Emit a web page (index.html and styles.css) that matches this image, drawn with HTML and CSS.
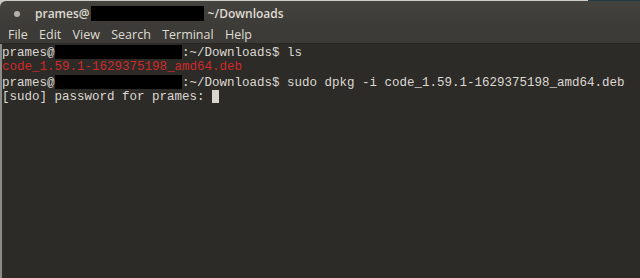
FILE: index.html
```html
<!DOCTYPE html>
<html>
<head>
<meta charset="utf-8">
<link rel="stylesheet" href="styles.css">
</head>
<body>
<div class="strip"><div class="strip-light"></div><div class="strip-blue"></div></div>
<div class="window">
  <div class="titlebar">
    <span class="dot"></span>
    <span class="title">prames@</span>
    <span class="redact-title"></span>
    <span class="title">~/Downloads</span>
  </div>
  <div class="menubar">
    <span>File</span><span>Edit</span><span>View</span><span>Search</span><span>Terminal</span><span>Help</span>
  </div>
  <div class="term">
    <div class="line">prames@<span class="redact"></span>:~/Downloads$ ls</div>
    <div class="line red">code_1.59.1-1629375198_amd64.deb</div>
    <div class="line">prames@<span class="redact"></span>:~/Downloads$ sudo dpkg -i code_1.59.1-1629375198_amd64.deb</div>
    <div class="line">[sudo] password for prames: <span class="cursor"></span></div>
  </div>
</div>
</body>
</html>
```
FILE: styles.css
```css
html, body {
  margin: 0;
  padding: 0;
  width: 640px;
  height: 278px;
  overflow: hidden;
  background: #c9c7c2;
}
.strip {
  display: flex;
  height: 1px;
}
.strip-light { flex: 1; background: #cfcdc8; }
.strip-blue { width: 52px; background: #1f3a48; }
.window {
  display: flex;
  flex-direction: column;
  height: 277px;
}
.titlebar {
  height: 25px;
  display: flex;
  align-items: center;
  background: linear-gradient(#45433e, #3c3b37);
  border-top-left-radius: 6px;
  font-family: "Open Sans", "Noto Sans", sans-serif;
  font-size: 12px;
  font-weight: 600;
  color: #dfdbd2;
}
.dot {
  width: 6px;
  height: 6px;
  border-radius: 50%;
  background: #b5b2ab;
  margin-left: 14px;
  margin-right: 15px;
}
.redact-title {
  width: 113px;
  height: 15px;
  background: #000;
  margin: 0 4px 0 1px;
}
.menubar {
  height: 17px;
  display: flex;
  align-items: center;
  background: #3c3b37;
  font-family: "Open Sans", "Noto Sans", sans-serif;
  font-size: 12.5px;
  color: #dfdbd2;
  padding-left: 8px;
  border-bottom: 1px solid #2a2926;
}
.menubar span { margin-right: 11.3px; }
.term {
  flex: 1;
  background: #2d2b28;
  border-left: 2px solid #8d8b86;
  padding-top: 1px;
  font-family: "Liberation Mono", "DejaVu Sans Mono", monospace;
  font-size: 12.5px;
  line-height: 15px;
  color: #dcd9d2;
}
.line { height: 15px; white-space: pre; }
.red { color: #cf2a2a; }
.redact {
  display: inline-block;
  width: 17ch;
  height: 14px;
  background: #000;
  vertical-align: -3px;
}
.cursor {
  display: inline-block;
  width: 7px;
  height: 13px;
  background: #d8d5ce;
  vertical-align: -3px;
}
```
